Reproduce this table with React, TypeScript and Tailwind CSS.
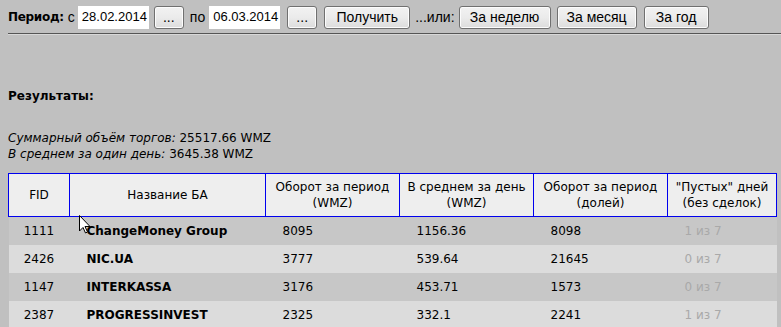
import React from "react";

const verdana = { fontFamily: '"DejaVu Sans", Verdana, sans-serif' };
const arial = { fontFamily: '"Liberation Sans", Arial, sans-serif' };

function Btn({ children, w }: { children: React.ReactNode; w: string }) {
  return (
    <button
      className={`h-[23px] ${w} shrink-0 rounded-[3px] border border-[#707070] bg-gradient-to-b from-[#f2f2f2] via-[#ebebeb] to-[#dcdcdc] text-[14px] leading-none text-black shadow-[inset_0_0_0_1px_#fcfcfc]`}
      style={arial}
    >
      {children}
    </button>
  );
}

function DateInput({ value }: { value: string }) {
  return (
    <div className="flex h-[23px] w-[71px] shrink-0 items-center bg-white pl-[4px] text-[13px] text-black" style={arial}>
      {value}
    </div>
  );
}

const rows = [
  ["1111", "ChangeMoney Group", "8095", "1156.36", "8098", "1 из 7"],
  ["2426", "NIC.UA", "3777", "539.64", "21645", "0 из 7"],
  ["1147", "INTERKASSA", "3176", "453.71", "1573", "0 из 7"],
  ["2387", "PROGRESSINVEST", "2325", "332.1", "2241", "1 из 7"],
];

export default function App() {
  return (
    <div className="relative h-[327px] w-[781px] overflow-hidden bg-[#c0c0c0] text-black" style={verdana}>
      <div className="flex h-[33px] items-center pl-[8px] pt-[1px] text-[12px]">
        <span className="shrink-0 font-bold tracking-[-0.3px]">Период:</span>
        <span className="ml-[4px] mr-[3px] shrink-0 text-[14px]" style={arial}>с</span>
        <DateInput value="28.02.2014" />
        <div className="ml-[5px] flex"><Btn w="w-[30px]">...</Btn></div>
        <span className="ml-[6px] mr-[4px] shrink-0 text-[14px]" style={arial}>по</span>
        <DateInput value="06.03.2014" />
        <div className="ml-[7px] flex"><Btn w="w-[30px]">...</Btn></div>
        <div className="ml-[7px] flex"><Btn w="w-[86px]">Получить</Btn></div>
        <span className="ml-[5px] mr-[4px] shrink-0 text-[14px]" style={arial}>...или:</span>
        <Btn w="w-[92px]">За неделю</Btn>
        <div className="ml-[6px] flex"><Btn w="w-[80px]">За месяц</Btn></div>
        <div className="ml-[7px] flex"><Btn w="w-[65px]">За год</Btn></div>
      </div>
      <div className="ml-[8px] h-[2px] border-t border-[#555555] bg-[#d8d8d8]" />

      <div className="ml-[8px] mt-[53px] text-[12px] font-bold leading-[16px]">Результаты:</div>

      <div className="ml-[8px] mt-[26px] text-[12px] leading-[16px]">
        <div><i>Суммарный объём торгов:</i> 25517.66 WMZ</div>
        <div><i>В среднем за один день:</i> 3645.38 WMZ</div>
      </div>

      <table className="ml-[8px] mt-[11px] w-[768px] table-fixed border-collapse text-[12px]">
        <colgroup>
          <col className="w-[61px]" />
          <col className="w-[196px]" />
          <col className="w-[134px]" />
          <col className="w-[134px]" />
          <col className="w-[134px]" />
          <col className="w-[109px]" />
        </colgroup>
        <thead>
          <tr className="h-[43px] bg-[#eeeeee]">
            {["FID", "Название БА", "Оборот за период\n(WMZ)", "В среднем за день\n(WMZ)", "Оборот за период\n(долей)", "\"Пустых\" дней\n(без сделок)"].map((h, i) => (
              <th key={i} className="whitespace-pre-line border border-[#0000ee] px-0 text-center align-middle text-[12px] font-normal leading-[16px]">
                {h}
              </th>
            ))}
          </tr>
        </thead>
        <tbody>
          {rows.map((r, i) => (
            <tr key={i} className={`h-[28px] ${i % 2 === 0 ? "bg-[#c7c7c7]" : "bg-[#dcdcdc]"}`}>
              <td className="text-center">{r[0]}</td>
              <td className="pl-[17px] font-bold">{r[1]}</td>
              <td className="pl-[17px]">{r[2]}</td>
              <td className="pl-[17px]">{r[3]}</td>
              <td className="pl-[17px]">{r[4]}</td>
              <td className="pl-[17px] text-[#a9a9a9]">{r[5]}</td>
            </tr>
          ))}
        </tbody>
      </table>

      <svg className="absolute left-[79px] top-[215px]" width="12" height="19" viewBox="0 0 12 19">
        <path d="M0.5 0.5 L0.5 16 L4 12.5 L6.5 18 L8.5 17 L6 11.5 L11 11.5 Z" fill="#ffffff" stroke="#000000" strokeWidth="1" />
      </svg>
    </div>
  );
}
